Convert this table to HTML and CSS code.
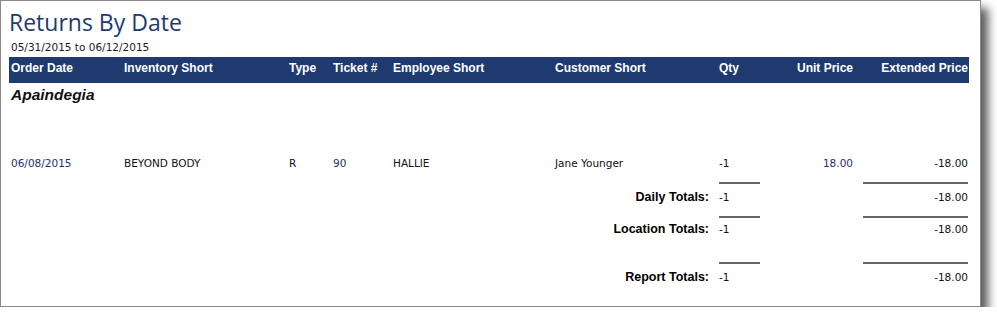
FILE: index.html
```html
<!DOCTYPE html>
<html lang="en">
<head>
  <meta charset="UTF-8">
  <title>Returns By Date</title>
  <link rel="stylesheet" href="styles.css">
</head>
<body>
  <div class="report">
    <h1 class="title">Returns By Date</h1>
    <div class="range">05/31/2015 to 06/12/2015</div>

    <div class="grid head">
      <div>Order Date</div>
      <div>Inventory Short</div>
      <div>Type</div>
      <div>Ticket #</div>
      <div>Employee Short</div>
      <div>Customer Short</div>
      <div>Qty</div>
      <div class="num">Unit Price</div>
      <div class="num">Extended Price</div>
    </div>

    <div class="group">Apaindegia</div>

    <div class="grid line">
      <div class="blue">06/08/2015</div>
      <div>BEYOND BODY</div>
      <div>R</div>
      <div class="blue">90</div>
      <div>HALLIE</div>
      <div>Jane Younger</div>
      <div>-1</div>
      <div class="num blue">18.00</div>
      <div class="num">-18.00</div>
    </div>

    <!-- subtotal blocks: rule row, then the totals row -->
    <div class="grid rules r1"><span class="qty-rule"></span><span class="ext-rule"></span></div>
    <div class="grid total">
      <div class="label">Daily Totals:</div>
      <div>-1</div>
      <div></div>
      <div class="num">-18.00</div>
    </div>

    <div class="grid rules r2"><span class="qty-rule"></span><span class="ext-rule"></span></div>
    <div class="grid total">
      <div class="label">Location Totals:</div>
      <div>-1</div>
      <div></div>
      <div class="num">-18.00</div>
    </div>

    <div class="grid rules r3"><span class="qty-rule"></span><span class="ext-rule"></span></div>
    <div class="grid total">
      <div class="label">Report Totals:</div>
      <div>-1</div>
      <div></div>
      <div class="num">-18.00</div>
    </div>
  </div>
</body>
</html>
```

FILE: styles.css
```css
body {
  margin: 0;
  background: #fff;
  font-family: "DejaVu Sans", sans-serif;
  color: #111;
}

.report {
  box-sizing: border-box;
  width: 981px;
  height: 307px;
  padding: 0 11px 0 8px;
  border: 1px solid #8a8a8a;
  background: #fff;
  box-shadow: 7px 8px 9px rgba(0, 0, 0, 0.65);
}

.title {
  margin: 0;
  height: 37px;
  padding-top: 4px;
  box-sizing: border-box;
  font-family: "Open Sans", sans-serif;
  font-weight: 400;
  font-size: 23px;
  line-height: 34px;
  color: #1f3a6e;
}

.range {
  height: 19px;
  padding-left: 2px;
  font-size: 10.5px;
  line-height: 18px;
  color: #1a1a2a;
}

.grid {
  display: grid;
  grid-template-columns: 113px 165px 44px 60px 162px 164px 62px 76px 113px;
}
.grid > div { padding-left: 2px; white-space: nowrap; }
.grid > .num { text-align: right; padding-left: 0; }
.grid > .num:nth-child(8) { padding-right: 2px; }

.head {
  height: 26px;
  background: #1f3a6e;
  color: #fff;
  font-family: "Liberation Sans", Arial, sans-serif;
  font-weight: 700;
  font-size: 12px;
  line-height: 23px;
}

.group {
  height: 25px;
  padding-left: 2px;
  font-family: "Liberation Sans", Arial, sans-serif;
  font-weight: 700;
  font-style: italic;
  font-size: 15.5px;
  line-height: 24px;
}

.line {
  margin-top: 45px;
  height: 20px;
  font-size: 10.5px;
  line-height: 20px;
}
.blue { color: #1f2f6a; }

.rules { height: 2px; }
.rules.r1 { margin-top: 9px; }
.rules.r2 { margin-top: 9px; }
.rules.r3 { margin-top: 23px; }
.qty-rule { grid-column: 7; width: 41px; margin-left: 2px; background: #666; }
.ext-rule { grid-column: 9; margin-left: 8px; background: #666; }

.total {
  margin-top: 3px;
  height: 20px;
  font-size: 10.5px;
  line-height: 20px;
}
.rules.r2 + .total { margin-top: 1px; }
.total > .label {
  grid-column: 1 / 7;
  text-align: right;
  padding-right: 8px;
  font-family: "Liberation Sans", Arial, sans-serif;
  font-weight: 700;
  font-size: 12.5px;
  color: #000;
}
```
